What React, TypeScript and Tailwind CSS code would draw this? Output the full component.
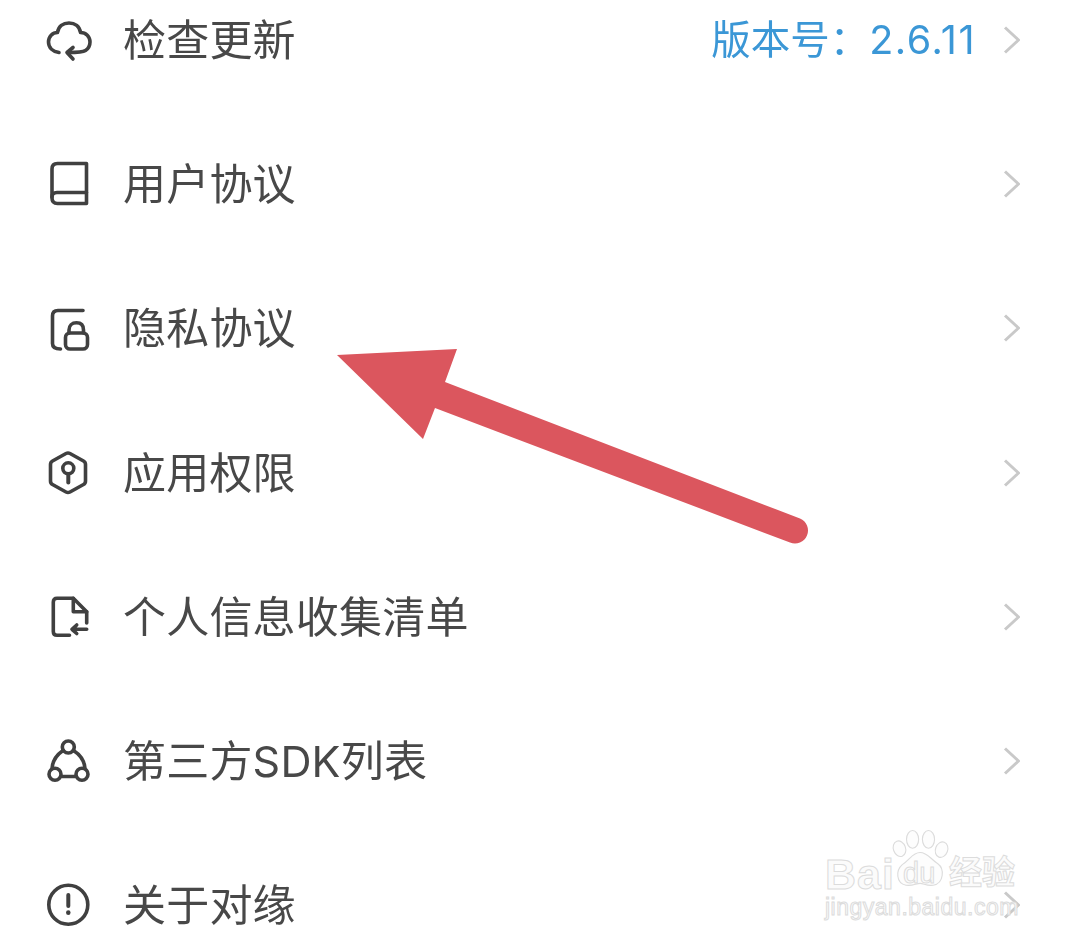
import React from "react";

const S = { fill: "none", stroke: "currentColor", strokeWidth: 3.6, strokeLinecap: "round", strokeLinejoin: "round" } as const;

const Cloud = () => (
  <>
    <path d="M14 36.500C7.500 35.500 3.500 31.500 3.500 26C3.500 20.500 7.500 16.500 12.500 16.500C13.500 10.500 18 7 24 7C30 7 34.500 10.500 35.500 16.500C41 16.500 45 20.500 45 26C45 29.500 43.500 32.500 40.500 34.500C37.500 36.500 32 36.500 23 36.500" />
    <path d="M28 31.500L22 36.500L28 43" />
  </>
);
const Book = () => (
  <>
    <path d="M41.500 3.500H12.500C9 3.500 7 5.500 7 9V38C7 41.500 9 43.500 12.500 43.500H41.500V3.500Z" />
    <path d="M7 37C7 34 9 32.500 12 32.500H41.500" />
  </>
);
const LockDoc = () => (
  <>
    <path d="M38 6.500H13C9.500 6.500 7.500 8.500 7.500 12V39.500C7.500 43 9.500 45 15.500 45" />
    <rect x="20.500" y="29" width="22" height="16" rx="4.500" />
    <path d="M24 29V26C24 21.500 27 18.800 31.500 18.800C36 18.800 38.500 21.500 38.500 26V29" />
  </>
);
const Shield = () => (
  <>
    <path d="M21 4.500C22.500 3.700 23.500 3.700 25 4.500L38.500 12C40 12.800 40.500 13.800 40.500 15.500V32C40.500 33.700 40 34.700 38.500 35.500L25 43C23.500 43.800 22.500 43.800 21 43L7.500 35.500C6 34.700 5.500 33.700 5.500 32V15.500C5.500 13.800 6 12.800 7.500 12L21 4.500Z" />
    <circle cx="23.300" cy="19.300" r="5.500" />
    <path d="M23.300 25V33.500" strokeWidth={4} />
  </>
);
const FileSwap = () => (
  <>
    <path d="M24.500 42.300H12C9.500 42.300 8.300 41 8.300 38.500V9C8.300 6.500 9.500 5.300 12 5.300H28.300L41.700 18.700V30" />
    <path d="M28.300 5.300V18.700H41.700" />
    <path d="M41.700 36.300H27M31.700 32L27 36.300L31.700 40.500" />
  </>
);
const Nodes = () => (
  <>
    <circle cx="23.300" cy="10" r="6" />
    <circle cx="10" cy="37.300" r="6" />
    <circle cx="37" cy="37.300" r="6" />
    <path d="M18 13.500C11.500 18 7.500 24 7 31.500M28.500 13.500C35.500 18 39.500 24 40 31.500M16.500 39.500H31" />
  </>
);
const Info = () => (
  <>
    <circle cx="23.300" cy="23.700" r="19.500" />
    <path d="M23.300 14V25" strokeWidth={4} />
    <path d="M23.300 31.500V31.800" strokeWidth={4.500} />
  </>
);

const rows: { icon: React.ReactNode; label: string; value?: boolean }[] = [
  { icon: <Cloud />, label: "检查更新", value: true },
  { icon: <Book />, label: "用户协议" },
  { icon: <LockDoc />, label: "隐私协议" },
  { icon: <Shield />, label: "应用权限" },
  { icon: <FileSwap />, label: "个人信息收集清单" },
  { icon: <Nodes />, label: "第三方SDK列表" },
  { icon: <Info />, label: "关于对缘" },
];

const Chevron = () => (
  <svg width="20" height="32" viewBox="0 0 20 32" className="text-[#c9c9c9] shrink-0">
    <path d="M3 3.500L16.500 16L3 28.500" {...S} strokeWidth={3} strokeLinecap="butt" />
  </svg>
);

export default function App() {
  return (
    <div
      className="relative w-[1076px] h-[944px] overflow-hidden bg-white"
      style={{ fontFamily: 'Inter, "Noto Sans CJK SC", sans-serif' }}
    >
      <div className="-mt-[32px] flex flex-col blur-[0.4px]">
        {rows.map((r) => (
          <div key={r.label} className="h-[144.2px] flex items-center pl-[45px] pr-[54px] shrink-0">
            <svg width="48" height="48" viewBox="0 0 48 48" className="text-[#404040] shrink-0">
              <g {...S}>{r.icon}</g>
            </svg>
            <span className="ml-[30px] pt-[1px] text-[43px] leading-none text-[#484848] tracking-[0.2px]">{r.label}</span>
            {r.value ? (
              <span className="ml-auto pt-[1px] text-[39.500px] leading-none text-[#3b97d6]">
                版本号：<span className="tracking-[1.500px]">2.6.11</span>
              </span>
            ) : (
              <span className="ml-auto" />
            )}
            <span className="ml-[26px]">
              <Chevron />
            </span>
          </div>
        ))}
      </div>

      {/* red annotation arrow */}
      <svg className="absolute left-0 top-0" width="1076" height="944" viewBox="0 0 1076 944">
        <path
          d="M337 355L457 349L445 382L800 518.500A13 13 0 0 1 790 542.500L435 408L423 439Z"
          fill="#db565e"
        />
      </svg>

      {/* watermark */}
      <div className="absolute left-[825px] top-[828px] w-[200px] h-[92px] text-[#fbfbfb] [-webkit-text-stroke:1px_#dcdcdc]">
        <span className="absolute left-0 top-[25px] text-[43px] leading-none font-bold tracking-[1px]" style={{ fontFamily: '"Liberation Sans", sans-serif' }}>
          Bai
        </span>
        <svg className="absolute left-[67px] top-0" width="58" height="62" viewBox="0 0 62 62" fill="#fdfdfd" stroke="#dcdcdc" strokeWidth="1.200">
          <ellipse cx="8" cy="20" rx="6.500" ry="8.500" transform="rotate(-20 8 20)" />
          <ellipse cx="22" cy="10" rx="6.500" ry="9.500" />
          <ellipse cx="39" cy="10" rx="6.500" ry="9.500" />
          <ellipse cx="53" cy="21" rx="6.500" ry="8.500" transform="rotate(20 53 21)" />
          <path d="M30 24C38 24 41 31 49 36C56 41 56 57 44 59C37 60 34 57 30 57C26 57 22 60 15 59C4 57 4 43 11 37C19 32 22 24 30 24Z" />
        </svg>
        <span className="absolute left-[78px] top-[31px] text-[29px] leading-none" style={{ fontFamily: '"Liberation Sans", sans-serif' }}>
          du
        </span>
        <span className="absolute left-[124px] top-[28px] text-[33px] leading-none font-bold">经验</span>
        <span className="absolute left-0 top-[68px] text-[23px] leading-none tracking-[0.500px] whitespace-nowrap" style={{ fontFamily: '"Liberation Sans", sans-serif' }}>
          jingyan.baidu.com
        </span>
      </div>
    </div>
  );
}
